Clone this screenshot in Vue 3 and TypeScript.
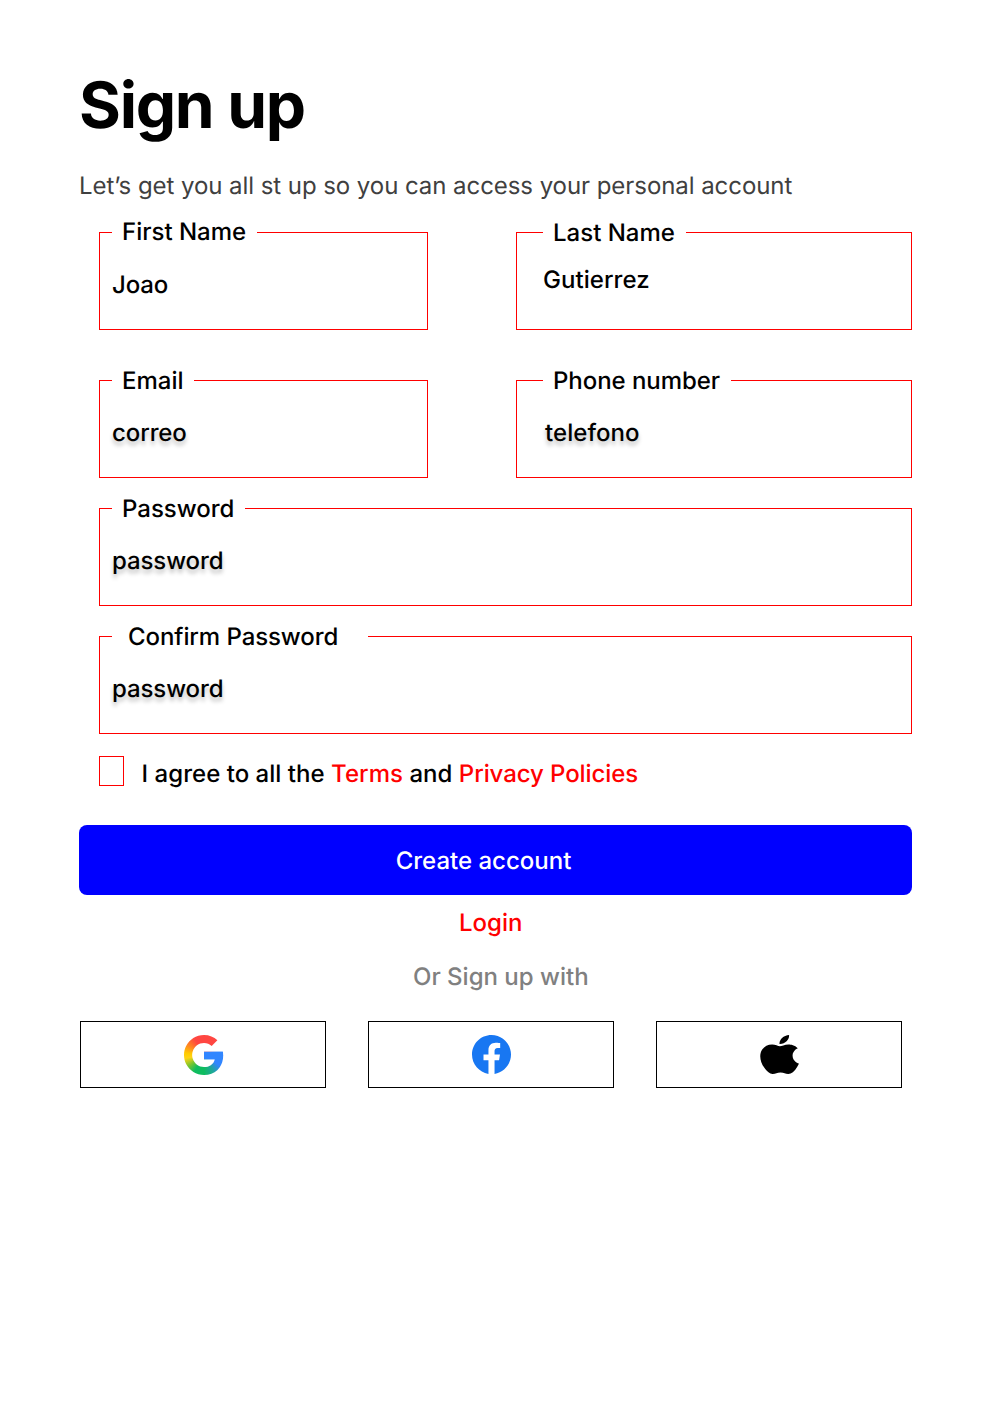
<script setup lang="ts">
interface Field {
  id: string
  label: string
  value: string
  shadow?: boolean
}

const rows: Field[][] = [
  [
    { id: 'first', label: 'First Name', value: 'Joao' },
    { id: 'last', label: 'Last Name', value: 'Gutierrez' },
  ],
  [
    { id: 'email', label: 'Email', value: 'correo', shadow: true },
    { id: 'phone', label: 'Phone number', value: 'telefono', shadow: true },
  ],
  [{ id: 'password', label: 'Password', value: 'password', shadow: true }],
  [{ id: 'confirm', label: 'Confirm Password', value: 'password', shadow: true }],
]
</script>

<template>
  <main class="page">
    <h1 class="title">Sign up</h1>
    <p class="subtitle">Let’s get you all st up so you can access your personal account</p>

    <form class="form" @submit.prevent>
      <div v-for="(row, i) in rows" :key="i" class="row" :class="`row-${i}`">
        <div v-for="f in row" :key="f.id" class="field" :class="f.id">
          <span class="label">{{ f.label }}</span>
          <span class="value" :class="{ shadow: f.shadow }">{{ f.value }}</span>
        </div>
      </div>
      <div class="agree">
        <span class="box"></span>
        <span class="agree-text">I agree to all the <a>Terms</a> and <a class="policies">Privacy Policies</a></span>
      </div>
    </form>

    <button class="create" type="button"><span>Create account</span></button>
    <a class="login">Login</a>
    <p class="or">Or Sign up with</p>

    <div class="social">
      <div class="provider">
        <svg width="40" height="40" viewBox="0 0 48 48">
          <defs>
            <clipPath id="g-shape">
              <path d="M46.98 24.55c0-1.57-.15-3.09-.38-4.55H24v9.02h12.94c-.58 2.96-2.26 5.48-4.78 7.18-2.15 1.45-4.92 2.3-8.16 2.3-6.26 0-11.57-4.22-13.47-9.91-.48-1.45-.76-2.99-.76-4.59s.27-3.14.76-4.59C12.43 13.72 17.74 9.5 24 9.5c3.54 0 6.71 1.22 9.21 3.6l6.85-6.85C35.9 2.38 30.47 0 24 0 14.62 0 6.51 5.38 2.56 13.22.92 16.46 0 20.12 0 24s.92 7.54 2.56 10.78C6.51 42.62 14.62 48 24 48c6.48 0 11.93-2.13 15.89-5.81 4.51-4.18 7.09-10.36 7.09-17.64z" />
            </clipPath>
          </defs>
          <foreignObject width="48" height="48" clip-path="url(#g-shape)">
            <div class="g-fill"></div>
          </foreignObject>
          <path fill="#3186ff" d="M24 20h22.6c.23 1.46.38 2.98.38 4.55 0 1.54-.12 3.03-.34 4.47H24z" />
        </svg>
      </div>
      <div class="provider">
        <svg width="39" height="39" viewBox="0 0 24 24" preserveAspectRatio="none">
          <path fill="#1877f2" d="M24 12.073c0-6.627-5.373-12-12-12s-12 5.373-12 12c0 5.99 4.388 10.954 10.125 11.854v-8.385H7.078v-3.47h3.047V9.43c0-3.007 1.792-4.669 4.533-4.669 1.312 0 2.686.235 2.686.235v2.953H15.83c-1.491 0-1.956.925-1.956 1.874v2.25h3.328l-.532 3.47h-2.796v8.385C19.612 23.027 24 18.062 24 12.073z" />
        </svg>
      </div>
      <div class="provider">
        <svg width="39" height="39" viewBox="2.1 0 19.7 24" preserveAspectRatio="none">
          <path d="M12.152 6.896c-.948 0-2.415-1.078-3.96-1.04-2.04.027-3.91 1.183-4.961 3.014-2.117 3.675-.546 9.103 1.519 12.09 1.013 1.454 2.208 3.09 3.792 3.039 1.52-.065 2.09-.987 3.935-.987 1.831 0 2.35.987 3.96.948 1.637-.026 2.676-1.48 3.676-2.948 1.156-1.688 1.636-3.325 1.662-3.415-.039-.013-3.182-1.221-3.22-4.857-.026-3.04 2.48-4.494 2.597-4.559-1.429-2.09-3.623-2.324-4.39-2.376-2-.156-3.675 1.09-4.61 1.09zM15.53 3.83c.843-1.012 1.4-2.427 1.245-3.83-1.207.052-2.662.805-3.532 1.818-.78.896-1.454 2.338-1.273 3.714 1.338.104 2.715-.688 3.559-1.701" />
        </svg>
      </div>
    </div>
  </main>
</template>

<style>
body {
  background: #fff;
}
</style>

<style scoped>
.page {
  box-sizing: border-box;
  width: 1002px;
  height: 1404px;
  padding: 67px 90px 0 79px;
  display: flex;
  flex-direction: column;
  overflow: hidden;
  font-family: Inter, "Liberation Sans", sans-serif;
  font-size: 24px;
  font-weight: 500;
  line-height: 30px;
  color: #000;
  white-space: nowrap;
  text-rendering: geometricPrecision;
}
.title {
  margin: 0;
  font-size: 64px;
  line-height: 78px;
  font-weight: 700;
  letter-spacing: -0.02em;
}
.subtitle {
  margin: 26px 0 0;
  font-weight: 400;
  letter-spacing: -0.06px;
  color: #404040;
}
.form {
  margin: 31px 0 0 20px;
}
.row {
  display: flex;
  justify-content: space-between;
}
.row-1 {
  margin-top: 50px;
}
.row-2,
.row-3 {
  margin-top: 30px;
}
.field {
  box-sizing: border-box;
  width: 100%;
  height: 98px;
  border: 1px solid #f00;
  padding-left: 12px;
  display: flex;
  flex-direction: column;
  align-items: flex-start;
}
.first,
.email {
  width: 329px;
}
.last,
.phone {
  width: 396px;
  padding-left: 26px;
}
.label {
  box-sizing: border-box;
  flex: none;
  height: 30px;
  margin-top: -15px;
  padding-left: 10px;
  background: #fff;
}
.value {
  margin-top: 22px;
  letter-spacing: -0.1px;
}
.first .label {
  width: 145px;
  margin-top: -16px;
}
.first .value {
  margin-top: 23px;
}
.last .label {
  width: 143px;
}
.last .value {
  margin-top: 17px;
  letter-spacing: 0.05px;
}
.email .label {
  width: 82px;
}
.phone .label {
  width: 188px;
  letter-spacing: -0.06px;
}
.phone .value {
  margin-left: 2px;
  letter-spacing: 0.05px;
}
.password .label {
  width: 133px;
}
.confirm .label {
  width: 256px;
  padding-left: 16px;
  letter-spacing: -0.08px;
}
.shadow {
  text-shadow: 0 4px 4px rgba(0, 0, 0, 0.25);
}
.agree {
  display: flex;
  margin-top: 22px;
}
.box {
  box-sizing: border-box;
  width: 25px;
  height: 30px;
  border: 1px solid #f00;
}
.agree-text {
  margin: 3px 0 0 17.6px;
  letter-spacing: 0.03px;
}
.agree a,
.login {
  color: #f00;
}
.agree .policies {
  letter-spacing: -0.09px;
}
.create {
  width: 833px;
  height: 70px;
  margin: 36px 0 0;
  padding: 2px 24px 0 0;
  border: 0;
  border-radius: 8px;
  background: #00f;
  color: #fff;
  font: inherit;
  text-rendering: inherit;
}
.login {
  margin: 13px 0 0 380px;
}
.or {
  margin: 24px 0 0 334px;
  color: #808080;
}
.social {
  display: flex;
  gap: 42px;
  margin: 29px 0 0 1px;
}
.provider {
  box-sizing: border-box;
  width: 246px;
  height: 67px;
  border: 1px solid #000;
  padding: 13px 0 0 103px;
}
.provider svg {
  display: block;
}
.g-fill {
  width: 48px;
  height: 48px;
  background: conic-gradient(from 0deg, #ff4641 0deg, #ff4641 60deg, #3186ff 75deg, #3186ff 125deg, #20a69c 150deg, #0ebc5f 180deg, #0ebc5f 210deg, #7ac52e 235deg, #ffd314 260deg, #ffcc00 275deg, #ff8a20 300deg, #ff4641 330deg, #ff4641 360deg);
}
</style>
